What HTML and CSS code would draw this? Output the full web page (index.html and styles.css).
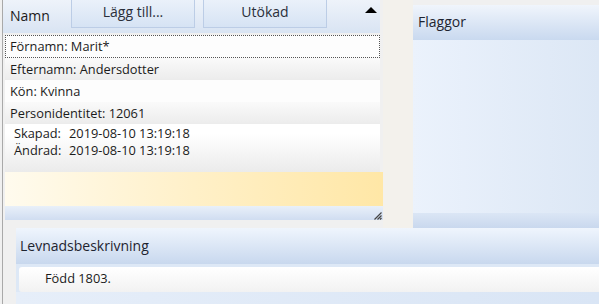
FILE: index.html
```html
<!DOCTYPE html>
<html lang="sv">

<head>
    <meta charset="UTF-8">
    <title>Person</title>
    <link rel="stylesheet" href="styles.css">
</head>

<body>
    <div class="app">
        <div class="top">
            <div class="person">
                <div class="person-header">
                    <span class="header-title">Namn</span>
                    <button class="tab-btn add-btn">Lägg till...</button>
                    <button class="tab-btn">Utökad</button>
                    <span class="collapse-arrow"></span>
                </div>

                <div class="rows">
                    <div class="row row-focus">Förnamn: Marit*</div>
                    <div class="row row-alt">Efternamn: Andersdotter</div>
                    <div class="row">Kön: Kvinna</div>
                    <div class="row row-alt">Personidentitet: 12061</div>
                    <div class="meta">
                        <span>Skapad:</span><span>2019-08-10 13:19:18</span>
                        <span>Ändrad:</span><span>2019-08-10 13:19:18</span>
                    </div>
                    <div class="highlight"></div>
                    <div class="status-bar">
                        <svg class="grip" width="9" height="9" viewBox="0 0 9 9">
                            <path d="M8.5 1.5 L1.5 8.5 M8.5 4.5 L4.5 8.5 M8.5 7 L7 8.5" stroke="#444" stroke-width="1.2" fill="none"/>
                        </svg>
                    </div>
                </div>
            </div>

            <div class="gap-col"></div>

            <div class="flags">
                <div class="panel-header">Flaggor</div>
                <div class="flags-body"></div>
                <div class="flags-footer"></div>
            </div>
        </div>

        <div class="bottom">
            <div class="bio">
                <div class="panel-header bio-header">Levnadsbeskrivning</div>
                <div class="bio-text">Född 1803.</div>
                <div class="bio-rest"></div>
            </div>
        </div>
    </div>
</body>

</html>
```

FILE: styles.css
```css
* {
    margin: 0;
    padding: 0;
    box-sizing: border-box;
}

body {
    width: 599px;
    height: 304px;
    overflow: hidden;
    background-color: #f0f0f0;
    font-family: 'Open Sans', 'Noto Sans', sans-serif;
    font-size: 12.8px;
    color: #1b1b1b;
}

.app {
    display: flex;
    flex-direction: column;
    height: 304px;
    margin-left: 2px;
    border-left: 1px solid #a9a9a9;
}

.top {
    display: flex;
    height: 228px;
}

/* left person panel */
.person {
    width: 380px;
    display: flex;
    flex-direction: column;
}

.person-header {
    height: 33px;
    margin-right: 3px;
    display: flex;
    align-items: flex-start;
    background: linear-gradient(to bottom, #eef3fa, #d9e4f3);
}

.header-title {
    width: 68px;
    padding: 6px 0 0 7px;
    font-size: 14px;
}

.tab-btn {
    height: 28px;
    width: 124px;
    margin-right: 8px;
    font-family: inherit;
    font-size: 14px;
    color: #2a2f3a;
    background: linear-gradient(to bottom, #eaf1fa, #d6e3f4);
    border: 1px solid #bccde6;
    border-top: none;
    padding-bottom: 4px;
}

.add-btn {
    width: 124px;
}

.collapse-arrow {
    margin: 7px 0 0 30px;
    width: 0;
    height: 0;
    border-left: 6px solid transparent;
    border-right: 6px solid transparent;
    border-bottom: 6px solid #000;
}

.rows {
    flex: 1;
    display: flex;
    flex-direction: column;
    margin-top: 2px;
    margin-left: 2px;
}

.row {
    height: 22px;
    margin-right: 3px;
    padding: 2px 0 0 5px;
    background: #fdfdfd;
}

.row-alt {
    background: linear-gradient(to bottom, #fafafa, #ececec);
}

.row-focus {
    height: 23px;
    padding-top: 1px;
    padding-left: 4px;
    border: 1px dotted #555;
    background: #fdfdfd;
}

.meta {
    height: 48px;
    margin-right: 3px;
    display: grid;
    grid-template-columns: 55px auto;
    align-content: start;
    padding: 1px 0 0 9px;
    line-height: 17px;
    background: linear-gradient(to bottom, #ffffff 20%, #ebebeb);
}

.highlight {
    height: 34px;
    background: linear-gradient(to right, #fffbee, #fff0c8 50%, #ffe7a6);
}

.status-bar {
    height: 14px;
    display: flex;
    justify-content: flex-end;
    align-items: flex-end;
    background: linear-gradient(to bottom, #e9f0f9, #d0ddf1);
}

.grip {
    flex-shrink: 0;
    margin-right: 1px;
}

.gap-col {
    width: 30px;
    background: #f3f1ec;
}

/* flags panel */
.flags {
    flex: 1;
    margin-top: 5px;
    display: flex;
    flex-direction: column;
}

.panel-header {
    height: 35px;
    padding: 7px 0 0 5px;
    font-size: 14px;
    color: #1e2430;
    background: linear-gradient(to bottom, #f0f5fc, #c9d9ef);
}

.flags-body {
    flex: 1;
    background: linear-gradient(to right, #ebf2fc, #dce7f5);
}

.flags-footer {
    height: 15px;
    background: linear-gradient(to bottom, #dbe6f5, #c9d8ee);
}

/* biography panel */
.bottom {
    flex: 1;
    padding-left: 13px;
}

.bio {
    height: 100%;
    display: flex;
    flex-direction: column;
    background: #dde8f6;
}

.bio-header {
    height: 36px;
    padding: 8px 0 0 4px;
    background: linear-gradient(to bottom, #eff5fd, #c8d8ee);
}

.bio-text {
    height: 25px;
    margin-top: 3px;
    margin-left: 3px;
    padding: 2px 0 0 26px;
    border-radius: 3px 0 0 3px;
    background: linear-gradient(to bottom, #ffffff, #f2f2f2);
}

.bio-rest {
    flex: 1;
    background: linear-gradient(to right, #e6eef9, #d9e5f5);
}
```
